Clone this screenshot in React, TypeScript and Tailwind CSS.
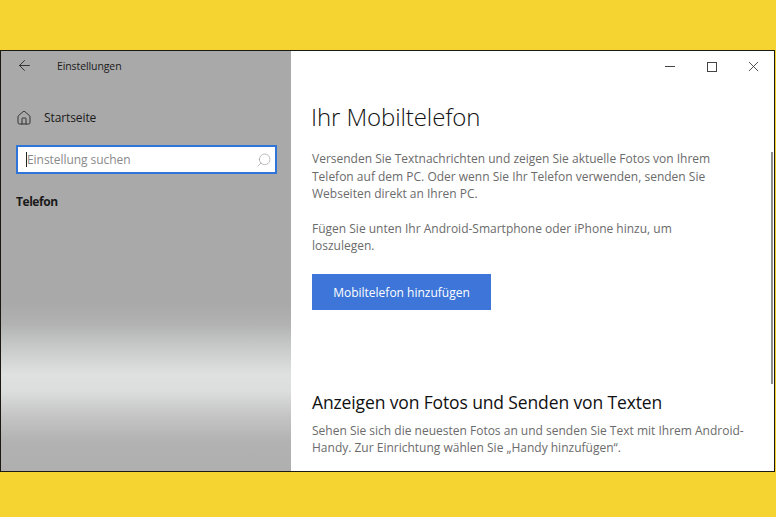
import React from 'react';
import { ArrowLeft, Home, Search, X } from 'lucide-react';

const font = { fontFamily: '"Open Sans", "Noto Sans", sans-serif' };

export default function App() {
  return (
    <div className="h-[517px] w-[776px] overflow-hidden bg-[#f5d330] pt-[50px]" style={font}>
      <div className="relative flex h-[422px] w-[775px] border border-[#1c1a10] bg-white">
        {/* sidebar */}
        <aside className="flex h-full w-[290px] shrink-0 flex-col bg-[linear-gradient(180deg,#a9a9a9_0%,#a9a9a9_60%,#b2b2b2_65%,#c6c8c8_70%,#dfe1e1_77%,#dcdddd_81%,#c4c4c4_87%,#b2b2b2_93%,#afafaf_100%)] pl-[15px] pr-[15px]">
          <div className="flex h-[31px] items-center">
            <ArrowLeft className="h-[17px] w-[17px] -translate-y-px text-[#222]" strokeWidth={1.2} />
            <span className="ml-[24px] text-[10.5px] tracking-[-0.1px] text-[#1a1a1a]">Einstellungen</span>
          </div>
          <div className="mt-[21px] flex h-[30px] items-center">
            <Home className="h-[16px] w-[16px] text-[#222]" strokeWidth={1.3} />
            <span className="ml-[12px] text-[12px] tracking-[-0.1px] text-[#1a1a1a]">Startseite</span>
          </div>
          <div className="mt-[12px] flex h-[29px] w-[261px] items-center border-2 border-[#2f74d8] bg-white pl-[8px] pr-[3px]">
            <span className="h-[15px] w-px bg-[#222]" />
            <span className="text-[12px] tracking-[-0.05px] text-[#8a8a8a]">Einstellung suchen</span>
            <Search className="ml-auto h-[16px] w-[16px] -scale-x-100 text-[#a5a5a5]" strokeWidth={1.1} />
          </div>
          <div className="mt-[19px] text-[12px] font-bold tracking-[-0.45px] text-[#1a1a1a]">Telefon</div>
        </aside>

        {/* content */}
        <main className="flex min-w-0 flex-1 flex-col">
          <div className="flex h-[31px] shrink-0 items-center justify-end pr-[12px] text-[#333]">
            <span className="mr-[32px] h-[1.5px] w-[10px] bg-[#444]" />
            <span className="mr-[28px] h-[10px] w-[10px] border-[1.5px] border-[#444]" />
            <X className="h-[17px] w-[17px]" strokeWidth={1.2} />
          </div>
          <div className="flex flex-1 flex-col pl-[21px] pr-[20px]">
            <h1 className="-ml-px mt-[19px] text-[24px] font-light leading-[32px] tracking-[-0.1px] text-[#111]">Ihr Mobiltelefon</h1>
            <p className="mt-[17px] w-[430px] text-[12px] leading-[17.5px] text-[#6b6b6b]">
              Versenden Sie Textnachrichten und zeigen Sie aktuelle Fotos von Ihrem Telefon auf dem PC. Oder wenn Sie Ihr Telefon verwenden, senden Sie Webseiten direkt an Ihren PC.
            </p>
            <p className="mt-[17px] w-[400px] text-[12px] leading-[17.5px] text-[#6b6b6b]">
              Fügen Sie unten Ihr Android-Smartphone oder iPhone hinzu, um loszulegen.
            </p>
            <button
              type="button"
              className="mt-[19px] flex h-[36px] w-[179px] items-center justify-center bg-[#3d75d8] pt-[2px] text-[12px] text-white"
            >
              Mobiltelefon hinzufügen
            </button>
            <h2 className="mt-[80px] text-[17.5px] leading-[24px] tracking-[-0.13px] text-[#111]">Anzeigen von Fotos und Senden von Texten</h2>
            <p className="mt-[8px] w-[440px] text-[12px] leading-[17px] text-[#6b6b6b]">
              Sehen Sie sich die neuesten Fotos an und senden Sie Text mit Ihrem Android-Handy. Zur Einrichtung wählen Sie „Handy hinzufügen“.
            </p>
          </div>
        </main>
        {/* scrollbar thumb */}
        <span className="absolute right-[1px] top-[101px] h-[232px] w-[2px] bg-[#8c8c8c]" />
      </div>
    </div>
  );
}
